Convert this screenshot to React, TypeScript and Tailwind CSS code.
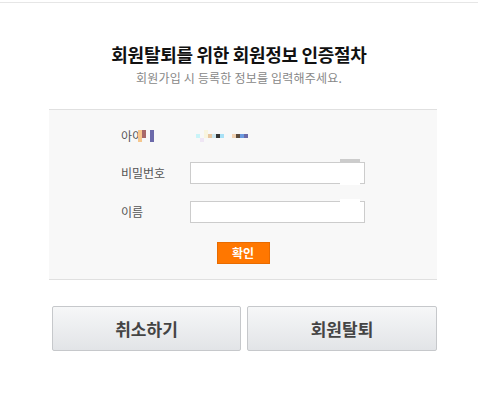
import React from "react";

const font = { fontFamily: '"Noto Sans CJK KR", "Noto Sans", sans-serif' };

function IdLabelCensor() {
  return (
    <svg width="16" height="12" viewBox="0 0 16 12" className="block shrink-0">
      <rect x="0" y="0" width="4" height="12" fill="#f6c78e" />
      <rect x="4" y="0" width="4" height="8" fill="#a86868" />
      <rect x="12" y="0" width="4" height="12" fill="#6c6aaa" />
    </svg>
  );
}

function IdValueCensor() {
  const r: [number, number, number, string][] = [
    [0, 4, 4, "#c9f4f8"],
    [4, 8, 4, "#efe6f4"],
    [8, 0, 8, "#f9f5df"],
    [12, 4, 4, "#e8c7a0"],
    [16, 4, 4, "#cde7f0"],
    [20, 4, 4, "#343434"],
    [24, 4, 4, "#a9e1f6"],
    [36, 4, 4, "#f1d2b3"],
    [40, 4, 4, "#5b4a3b"],
    [44, 4, 4, "#6b9ae0"],
    [48, 4, 4, "#6a6aa8"],
  ];
  return (
    <svg width="52" height="12" viewBox="0 0 52 12" className="block">
      {r.map(([x, y, h, c], i) => (
        <rect key={i} x={x} y={y} width="4" height={h} fill={c} />
      ))}
    </svg>
  );
}

export default function App() {
  return (
    <div className="w-[478px] h-[395px] bg-white overflow-hidden" style={font}>
      <div className="mt-[2px] h-px bg-[#e6e6e6]" />
      <div className="mt-[39px] text-center text-[18px] leading-[24px] font-bold text-[#111] tracking-[-0.3px]">
        회원탈퇴를 위한 회원정보 인증절차
      </div>
      <div className="mt-[4px] text-center text-[12px] leading-[16px] text-[#888] tracking-[0.2px]">
        회원가입 시 등록한 정보를 입력해주세요.
      </div>

      <div className="ml-[49px] mt-[23px] w-[388px] bg-[#f8f8f8] border-t border-b border-[#e0e0e0] pt-[16px] pb-[15px]">
        <div className="flex items-center h-[20px] pl-[72px]">
          <div className="w-[69px] flex items-center text-[12px] text-[#555]">
            <span>아이</span>
            <span className="ml-[-5px]">
              <IdLabelCensor />
            </span>
          </div>
          <div className="ml-[6px]">
            <IdValueCensor />
          </div>
        </div>

        <div className="flex items-center h-[22px] pl-[72px] mt-[16px]">
          <div className="w-[69px] text-[12px] text-[#555]">비밀번호</div>
          <div className="relative">
            <input
              type="password"
              className="block w-[175px] h-[22px] bg-white border border-[#cccccc] outline-none"
            />
            <div className="absolute left-[150px] top-[-3px] w-[20px] h-[3px] bg-[#cccccc]" />
            <div className="absolute left-[150px] bottom-[-1px] w-[20px] h-[2px] bg-white" />
          </div>
        </div>

        <div className="flex items-center h-[22px] pl-[72px] mt-[17px]">
          <div className="w-[69px] text-[12px] text-[#555]">이름</div>
          <div className="relative">
            <input
              type="text"
              className="block w-[175px] h-[22px] bg-white border border-[#cccccc] outline-none"
            />
            <div className="absolute left-[150px] top-[-2px] w-[20px] h-[3px] bg-white" />
          </div>
        </div>

        <div className="flex justify-center mt-[19px]">
          <button className="w-[53px] h-[22px] bg-[#ff7700] border border-[#e86b00] text-white text-[12px] font-bold leading-none">
            확인
          </button>
        </div>
      </div>

      <div className="ml-[52px] mt-[26px] flex gap-[6px]">
        <button className="w-[189px] h-[45px] rounded-[2px] border border-[#c6c8cb] bg-gradient-to-b from-[#f6f7f8] to-[#e2e4e7] text-[17px] font-bold text-[#444]">
          취소하기
        </button>
        <button className="w-[190px] h-[45px] rounded-[2px] border border-[#c6c8cb] bg-gradient-to-b from-[#f6f7f8] to-[#e2e4e7] text-[17px] font-bold text-[#444]">
          회원탈퇴
        </button>
      </div>
    </div>
  );
}
